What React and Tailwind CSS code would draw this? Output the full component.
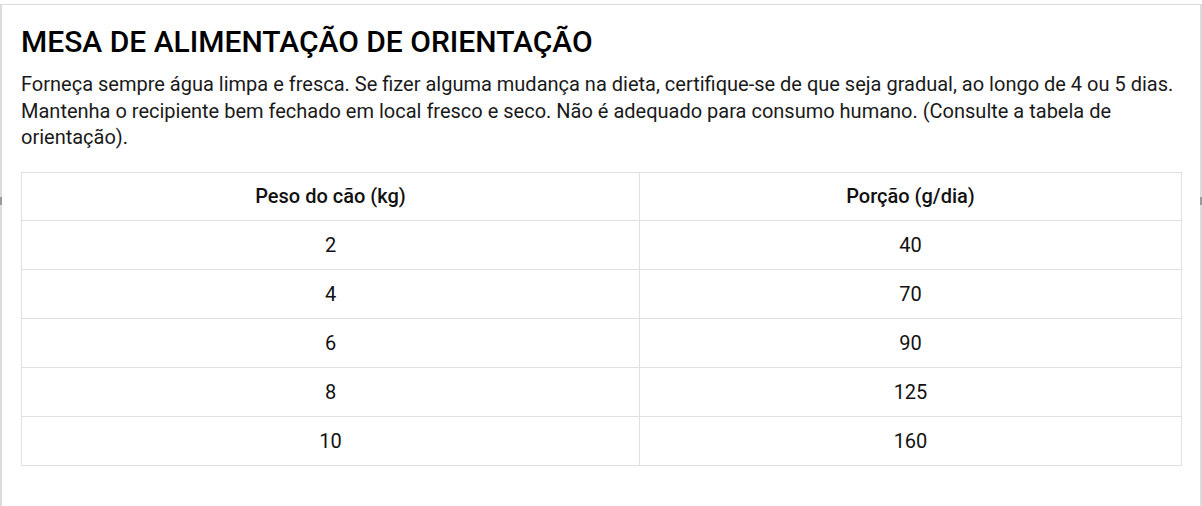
const rows = [
  ["2", "40"],
  ["4", "70"],
  ["6", "90"],
  ["8", "125"],
  ["10", "160"],
];

export default function App() {
  return (
    <div
      className="relative h-[506px] w-[1202px] bg-white border-x-2 border-[#dcdcdf] text-[#111]"
      style={{ fontFamily: "Roboto, 'Noto Sans', sans-serif" }}
    >
      <span className="absolute -left-[2px] top-[193px] h-[8px] w-[2px] bg-[#9a9a9a]" />
      <span className="absolute -right-[2px] top-[193px] h-[8px] w-[2px] bg-[#9a9a9a]" />
      <div className="mt-[4px] border-t border-[#dcdcdf] pl-[19px] pr-[19px] pt-[19px]">
        <h2 className="text-[30px] font-medium leading-[36px] text-black">
          MESA DE ALIMENTAÇÃO DE ORIENTAÇÃO
        </h2>
        <p className="mt-[11px] text-[20px] leading-[26.5px] text-[#1a1a1a]">
          Forneça sempre água limpa e fresca. Se fizer alguma mudança na dieta, certifique-se de que seja gradual, ao
          longo de 4 ou 5 dias. Mantenha o recipiente bem fechado em local fresco e seco. Não é adequado para consumo
          humano. (Consulte a tabela de orientação).
        </p>
        <table className="mt-[21px] w-[1161px] border-collapse text-[20px] text-[#111]">
          <thead>
            <tr>
              <th className="h-[48px] w-[618px] border border-[#dee0e4] font-medium">Peso do cão (kg)</th>
              <th className="h-[48px] border border-[#dee0e4] font-medium">Porção (g/dia)</th>
            </tr>
          </thead>
          <tbody>
            {rows.map(([peso, porcao]) => (
              <tr key={peso}>
                <td className="h-[49px] border border-[#dee0e4] text-center">{peso}</td>
                <td className="h-[49px] border border-[#dee0e4] text-center">{porcao}</td>
              </tr>
            ))}
          </tbody>
        </table>
      </div>
    </div>
  );
}
